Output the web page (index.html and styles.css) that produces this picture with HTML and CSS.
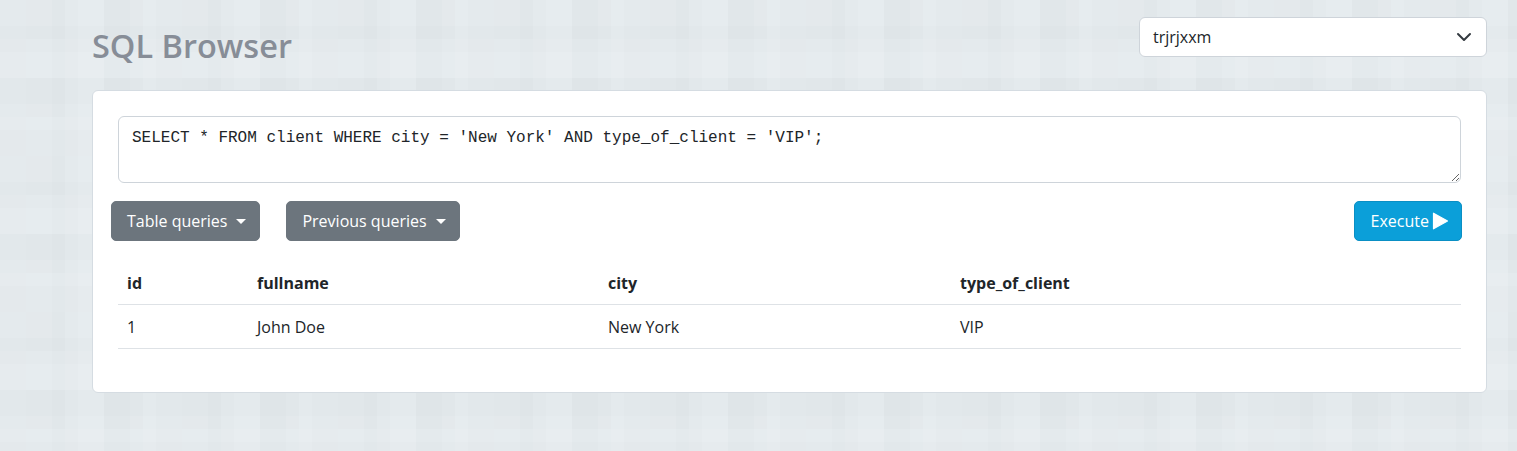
FILE: index.html
```html
<!DOCTYPE html>
<html lang="en">
<head>
<meta charset="utf-8">
<title>SQL Browser</title>
<link rel="stylesheet" href="styles.css">
</head>
<body>
<div class="page">
  <header class="topbar">
    <h1 class="title">SQL Browser</h1>
    <div class="select">
      <span class="select-value">trjrjxxm</span>
      <svg class="chevron" width="16" height="16" viewBox="0 0 16 16"><path d="M2 5l6 6 6-6" fill="none" stroke="#343a40" stroke-width="2" stroke-linecap="round" stroke-linejoin="round"/></svg>
    </div>
  </header>
  <main class="card">
    <textarea class="query" spellcheck="false">SELECT * FROM client WHERE city = 'New York' AND type_of_client = 'VIP';</textarea>
    <div class="actions">
      <div class="left-actions">
        <button class="btn btn-grey">Table queries<span class="caret"></span></button>
        <button class="btn btn-grey">Previous queries<span class="caret"></span></button>
      </div>
      <button class="btn btn-exec">Execute<svg class="play" width="16" height="18" viewBox="0 0 16 18"><path d="M1.5 1.2v15.6L15.5 9z" fill="#fff" stroke="#fff" stroke-width="1.2" stroke-linejoin="round"/></svg></button>
    </div>
    <table class="results">
      <colgroup><col class="c-id"><col class="c-name"><col class="c-city"><col></colgroup>
      <thead>
        <tr><th>id</th><th>fullname</th><th>city</th><th>type_of_client</th></tr>
      </thead>
      <tbody>
        <tr><td>1</td><td>John Doe</td><td>New York</td><td>VIP</td></tr>
      </tbody>
    </table>
  </main>
</div>
</body>
</html>
```
FILE: styles.css
```css
* { box-sizing: border-box; }
html, body { margin: 0; padding: 0; }
body {
  font-family: "Open Sans", "Noto Sans", "Liberation Sans", sans-serif;
  font-size: 16px;
  color: #212529;
  background-color: #e4eaed;
  background-image:
    conic-gradient(rgba(255,255,255,0.09) 25%, transparent 0 50%, rgba(0,0,0,0.008) 0 75%, transparent 0),
    conic-gradient(transparent 25%, rgba(255,255,255,0.07) 0 50%, transparent 0 75%, rgba(0,0,0,0.01) 0);
  background-size: 52px 52px, 78px 78px;
  background-position: 0 0, 26px 0;
  min-height: 451px;
}
.page {
  padding: 17px 30px 0 92px;
}
.topbar {
  display: flex;
  justify-content: space-between;
  align-items: flex-start;
  height: 73px;
}
.title {
  margin: 7px 0 0 0;
  font-size: 32.5px;
  font-weight: 600;
  color: #878d97;
  line-height: 44px;
}
.select {
  width: 348px;
  height: 40px;
  background: #fff;
  border: 1px solid #ced4da;
  border-radius: 6px;
  display: flex;
  align-items: center;
  justify-content: space-between;
  padding: 0 14px 0 13px;
}
.select-value {
  font-size: 16px;
  color: #212529;
}
.chevron { display: block; }
.card {
  background: #fff;
  border: 1px solid #d5dce2;
  border-radius: 6px;
  padding: 25px 25px 26px 25px;
}
.query {
  display: block;
  width: 100%;
  height: 67px;
  border: 1px solid #ced4da;
  border-radius: 6px;
  padding: 9px 13px 7px 13px;
  font-family: "Liberation Mono", "DejaVu Sans Mono", monospace;
  font-size: 16px;
  line-height: 24px;
  color: #212529;
  resize: vertical;
  outline: none;
}
.actions {
  display: flex;
  justify-content: space-between;
  margin: 18px -1px 0 -7px;
}
.left-actions {
  display: flex;
  gap: 26px;
}
.btn {
  height: 40px;
  border-radius: 5px;
  font-family: inherit;
  font-size: 16px;
  color: #fff;
  padding: 0 13px 0 15px;
  display: flex;
  align-items: center;
  cursor: pointer;
}
.btn-grey {
  background: #6c757d;
  border: 1px solid #6c757d;
}
.caret {
  display: inline-block;
  margin-left: 9px;
  border-top: 5px solid #fff;
  border-left: 5px solid transparent;
  border-right: 5px solid transparent;
  margin-top: 1px;
}
.btn-exec {
  background: #0b9fd9;
  border: 1px solid #0a8fc4;
  padding: 0 13px 0 16px;
}
.play { margin-left: 3px; display: block; }
.results {
  width: 100%;
  border-collapse: collapse;
  margin-top: 20px;
  margin-bottom: 17px;
}
.c-id { width: 130px; }
.c-name { width: 351px; }
.c-city { width: 352px; }
.results th, .results td {
  text-align: left;
  padding: 10px 9px 9px 9px;
  line-height: 24px;
  border-bottom: 1px solid #dee2e6;
}
.results th {
  font-weight: 700;
}
.results td {
  font-weight: 400;
}
```
